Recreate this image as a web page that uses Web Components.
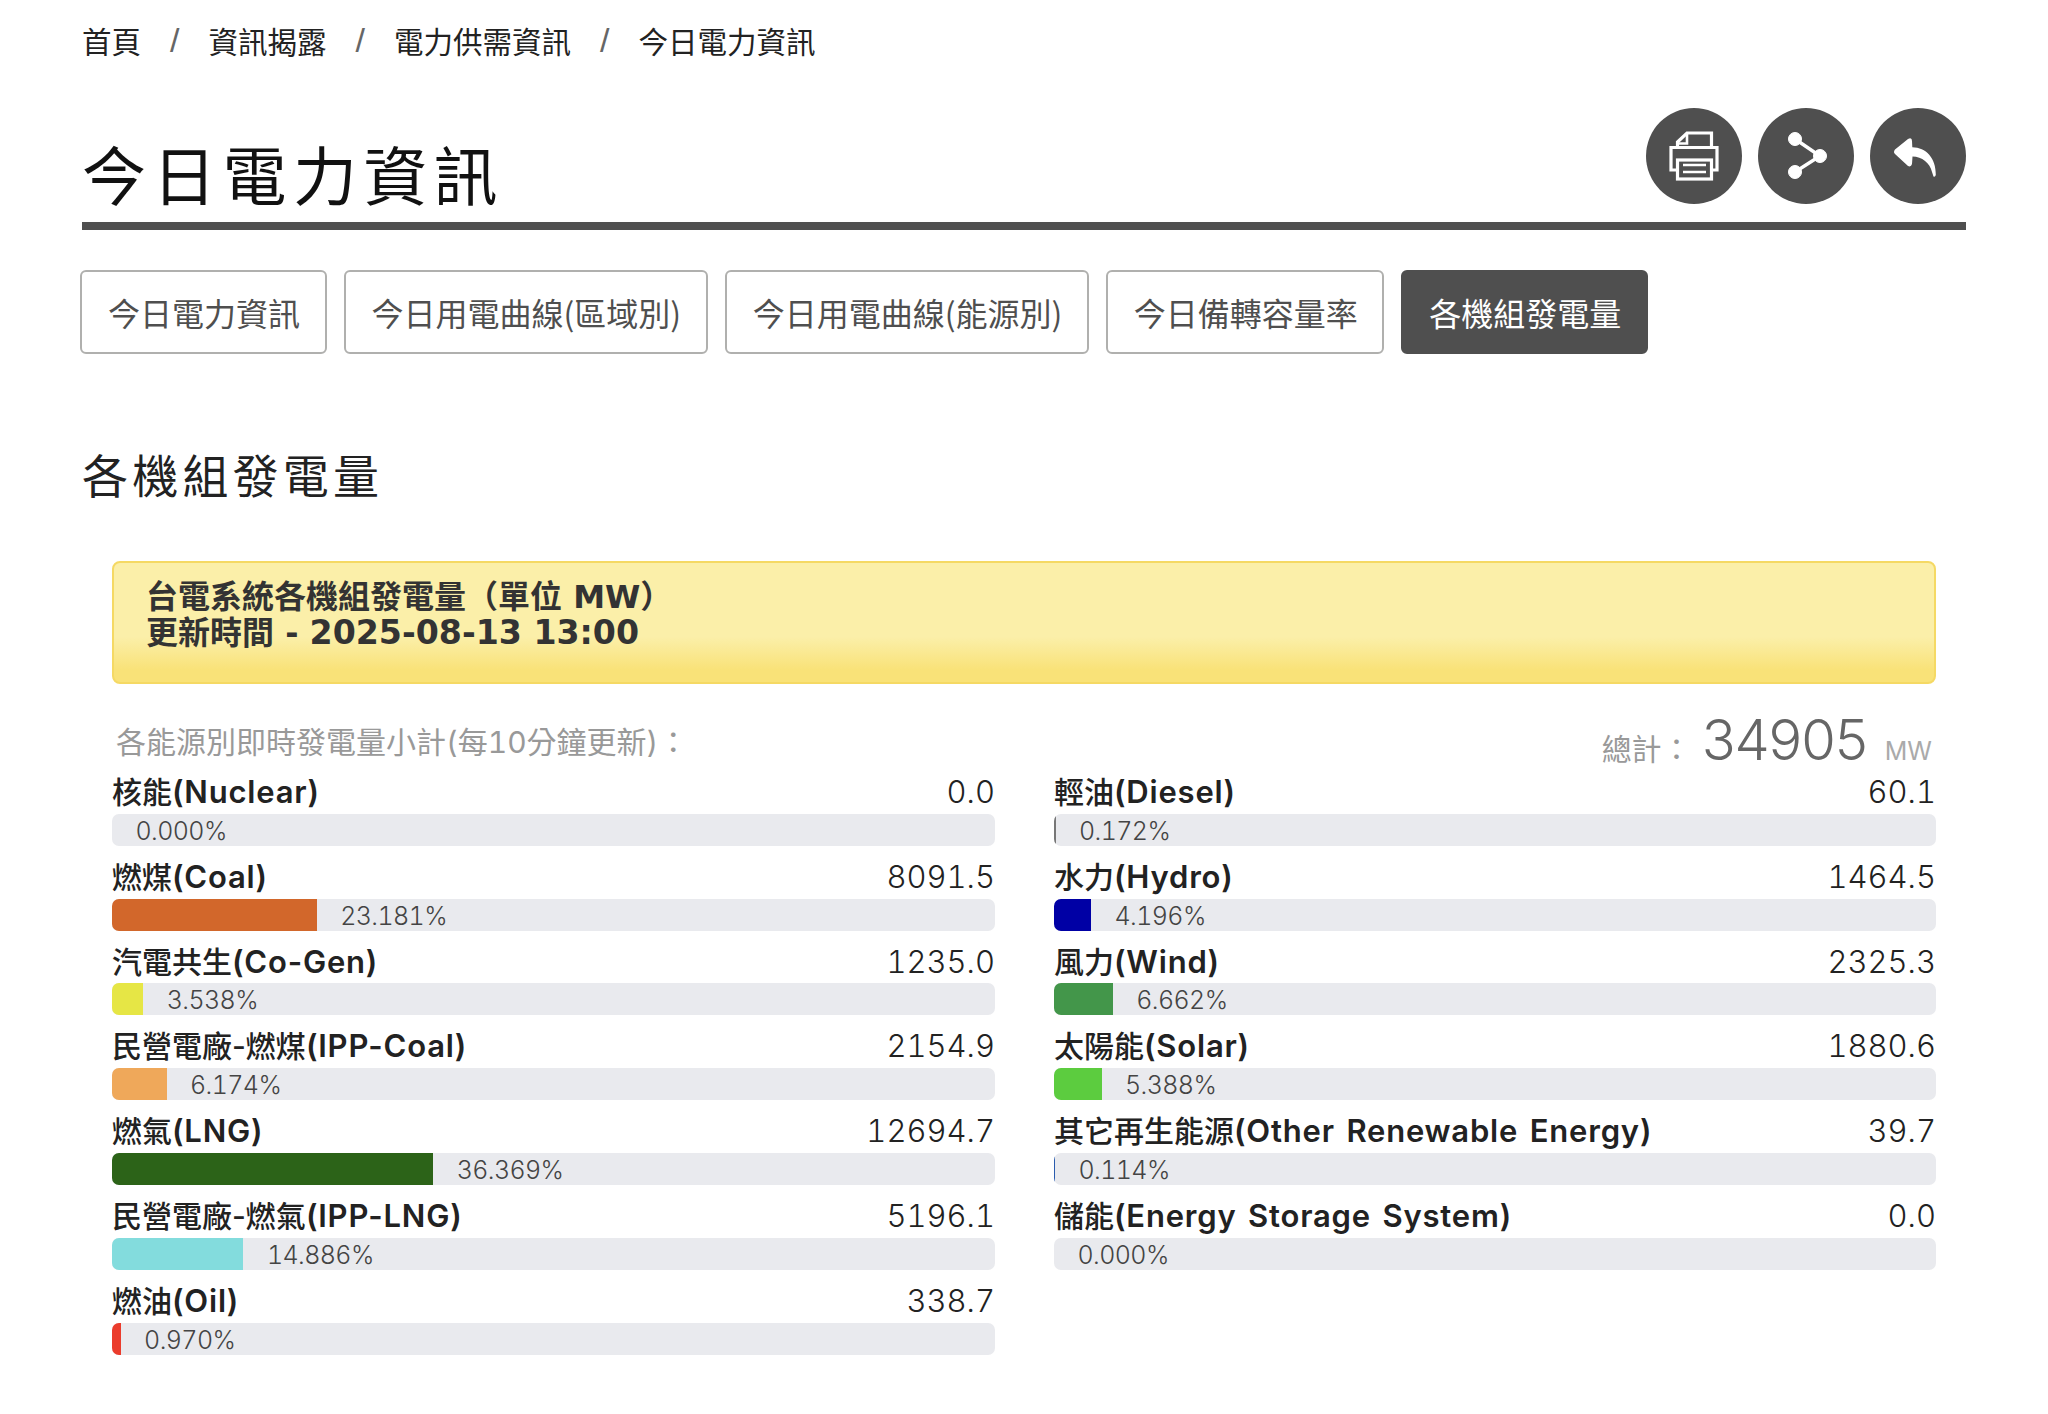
<!doctype html>
<html lang="zh-Hant"><head><meta charset="utf-8"><title>今日電力資訊</title>
<style>
html,body{margin:0;background:#fff}
body{font-family:Inter,"Noto Sans CJK TC",sans-serif;color:#222}
</style></head><body>
<power-page>
  <power-breadcrumb slot="crumbs" items="首頁|資訊揭露|電力供需資訊|今日電力資訊"></power-breadcrumb>
  <power-header slot="header" heading="今日電力資訊">
    <icon-button name="print" label="列印"></icon-button>
    <icon-button name="share" label="分享"></icon-button>
    <icon-button name="back" label="返回"></icon-button>
  </power-header>
  <power-tabs slot="tabs">
    <power-tab>今日電力資訊</power-tab>
    <power-tab>今日用電曲線(區域別)</power-tab>
    <power-tab>今日用電曲線(能源別)</power-tab>
    <power-tab>今日備轉容量率</power-tab>
    <power-tab active>各機組發電量</power-tab>
  </power-tabs>
  <section-title slot="section">各機組發電量</section-title>
  <power-notice slot="notice">台電系統各機組發電量（單位 MW）<br>更新時間 - <span style="font-size:33.2px">2025-08-13 13:00</span></power-notice>
  <power-panel slot="panel" caption="各能源別即時發電量小計(每10分鐘更新)：" total="34905">
    <energy-row slot="left" label="核能(Nuclear)" value="0.0" pct="0.000"></energy-row>
    <energy-row slot="left" label="燃煤(Coal)" value="8091.5" pct="23.181" color="#d2672b"></energy-row>
    <energy-row slot="left" label="汽電共生(Co-Gen)" value="1235.0" pct="3.538" color="#e6e645"></energy-row>
    <energy-row slot="left" label="民營電廠-燃煤(IPP-Coal)" value="2154.9" pct="6.174" color="#efa85a"></energy-row>
    <energy-row slot="left" label="燃氣(LNG)" value="12694.7" pct="36.369" color="#2c6318"></energy-row>
    <energy-row slot="left" label="民營電廠-燃氣(IPP-LNG)" value="5196.1" pct="14.886" color="#83dcdd"></energy-row>
    <energy-row slot="left" label="燃油(Oil)" value="338.7" pct="0.970" color="#eb3c2c"></energy-row>
    <energy-row slot="right" label="輕油(Diesel)" value="60.1" pct="0.172" color="#777"></energy-row>
    <energy-row slot="right" label="水力(Hydro)" value="1464.5" pct="4.196" color="#0000a5"></energy-row>
    <energy-row slot="right" label="風力(Wind)" value="2325.3" pct="6.662" color="#43964a"></energy-row>
    <energy-row slot="right" label="太陽能(Solar)" value="1880.6" pct="5.388" color="#5ccc3f"></energy-row>
    <energy-row slot="right" label="其它再生能源(Other Renewable Energy)" value="39.7" pct="0.114" color="#2a5cae"></energy-row>
    <energy-row slot="right" label="儲能(Energy Storage System)" value="0.0" pct="0.000"></energy-row>
  </power-panel>
</power-page>
<script>
const CJK='"Noto Sans CJK TC"';
function def(name,html,extra){
  const t=document.createElement('template');t.innerHTML=html;
  customElements.define(name,class extends HTMLElement{
    constructor(){super();this.attachShadow({mode:'open'}).appendChild(t.content.cloneNode(true));}
    connectedCallback(){extra&&extra.call(this,this.shadowRoot);}
  });
}
def('power-page',`<style>
:host{display:block;padding:0 82px;height:1414px;box-sizing:border-box;overflow:hidden}
.body{padding:0 30px}
</style><slot name="crumbs"></slot><slot name="header"></slot><slot name="tabs"></slot><slot name="section"></slot>
<div class="body"><slot name="notice"></slot><slot name="panel"></slot></div>`);
def('power-breadcrumb',`<style>
:host{display:block;padding-top:19px;height:45px;font:29.5px/42px ${CJK},sans-serif;color:#222}
ol{display:flex;margin:0;padding:0;list-style:none}
li+li::before{content:"/";color:#666;margin:0 29px;font:400 34px/42px "Liberation Sans",sans-serif;vertical-align:top}
</style><ol></ol>`,function(r){
  const ol=r.querySelector('ol');
  ol.innerHTML='';
  this.getAttribute('items').split('|').forEach(s=>{const li=document.createElement('li');li.textContent=s;ol.appendChild(li);});
});
def('power-header',`<style>
:host{display:flex;justify-content:space-between;align-items:flex-start;border-bottom:8px solid #4f4f4f;height:158px}
h1{margin:0;padding-top:62px;font:400 64px/92px ${CJK},sans-serif;letter-spacing:6.3px;color:#111}
.btns{display:flex;gap:16px;padding-top:44px}
</style><h1></h1><div class="btns"><slot></slot></div>`,function(r){r.querySelector('h1').textContent=this.getAttribute('heading');});
const ICONS={
print:`<g fill="none" stroke="#fff" stroke-width="3.2"><path d="M31.500 39 V34 L41 25 H65.500 V39"/><path d="M41 25 V35.500 H31.500" stroke-width="2.6"/><path d="M31 62 H25 V39.500 H71 V62 H65.500"/><rect x="31.500" y="52" width="34" height="19"/><path d="M37 57 H60 M37 64 H60" stroke-width="2.6"/></g>`,
share:`<g fill="#fff" stroke="#fff"><path d="M37 31 L62 48 L37 64" fill="none" stroke-width="3.4"/><circle cx="37" cy="31" r="6.500"/><circle cx="37" cy="64" r="6.500"/><circle cx="62" cy="48" r="6.500"/></g>`,
back:`<path fill="#fff" d="M38 31 Q42 29 42 33 L42.300 39.300 C56 39.500 66 50 65.800 67 Q65 69.500 63.500 68.500 L62 64 C60 55 52 48.500 42.500 48.500 L42 56 Q41 59.500 38 58 L25 46 Q23 44 25 41.500 Z"/>`};
def('icon-button',`<style>
:host{display:block;width:96px;height:96px;border-radius:50%;background:#4f4f4f}
svg{display:block;width:96px;height:96px}
</style><svg viewBox="0 0 96 96" role="img"></svg>`,function(r){const s=r.querySelector('svg');s.innerHTML=ICONS[this.getAttribute('name')];s.setAttribute('aria-label',this.getAttribute('label'));});
def('power-tabs',`<style>
:host{display:flex;gap:17px;margin:40px 0 0 -2px}
</style><slot></slot>`);
def('power-tab',`<style>
:host{display:block;box-sizing:border-box;height:84px;padding:0 24.500px 0 26px;border:2px solid #b0b0ae;border-radius:6px;font:400 32px/80px ${CJK},sans-serif;color:#4f4f4f;background:#fff}
:host([active]){background:#4f4f4f;border-color:#4f4f4f;color:#fff}
</style><slot></slot>`);
def('section-title',`<style>
:host{display:block;margin-top:87px;height:64px;font:400 46px/64px ${CJK},sans-serif;letter-spacing:4.2px;color:#222}
</style><slot></slot>`);
def('power-notice',`<style>
:host{display:block;box-sizing:border-box;margin-top:55.500px;height:123.500px;padding:16.500px 32px;border:2px solid #f5d964;border-radius:8px;
background:linear-gradient(#fbefa9 0,#fbefa9 62%,#f9e278 90%,#f9e278 100%);font:700 32px/36px "DejaVu Sans",${CJK},sans-serif;color:#333}
</style><slot></slot>`);
def('power-panel',`<style>
:host{display:block;margin-top:15px}
.top{display:flex;justify-content:space-between;align-items:flex-end;height:72px;padding:0 4px;color:#999;font:400 30px/38px Inter,${CJK},sans-serif;font-feature-settings:"tnum"}
.cap{margin-bottom:10px}
.total{display:flex;align-items:baseline;margin-bottom:-2.500px}
b{font:300 56px/68px Inter,sans-serif;color:#666;letter-spacing:-1.100px;margin:0 18px 0 10px}
small{font-size:25px;color:#aaa}
.cols{display:grid;grid-template-columns:883px 1fr;column-gap:59px}
</style>
<div class="top"><span class="cap"></span><span class="total"><span>總計：</span><b></b><small>MW</small></span></div>
<div class="cols"><div><slot name="left"></slot></div><div><slot name="right"></slot></div></div>`,function(r){
  r.querySelector('.cap').textContent=this.getAttribute('caption');
  r.querySelector('b').textContent=this.getAttribute('total');
});
def('energy-row',`<style>
:host{display:block;height:84.83px}
.head{display:flex;justify-content:space-between;height:42.83px;font:500 30px/41px Inter,${CJK},sans-serif;color:#222}
.en{font-size:31px;font-weight:600;letter-spacing:.8px;word-spacing:3px}
.val{font-size:31px;font-weight:300;color:#222;font-feature-settings:"tnum"}
.bar{display:flex;align-items:center;height:32px;background:#e9eaee;border-radius:7px;overflow:hidden}
.fill{height:100%}
.pct{margin-left:23.500px;padding-top:3px;font:300 25px/29px Inter,sans-serif;letter-spacing:-.6px;color:#444;font-feature-settings:"tnum"}
</style>
<div class="head"><span class="lab"><span class="zh"></span><span class="en"></span></span><span class="val"></span></div>
<div class="bar"><div class="fill"></div><span class="pct"></span></div>`,function(r){
  const l=this.getAttribute('label'),i=l.indexOf('(');
  r.querySelector('.zh').textContent=l.slice(0,i);
  r.querySelector('.en').textContent=l.slice(i);
  r.querySelector('.val').textContent=this.getAttribute('value');
  const p=this.getAttribute('pct');
  r.querySelector('.pct').textContent=p+'%';
  const f=r.querySelector('.fill');f.style.width=p+'%';f.style.background=this.getAttribute('color')||'transparent';
});
</script>
</body></html>
